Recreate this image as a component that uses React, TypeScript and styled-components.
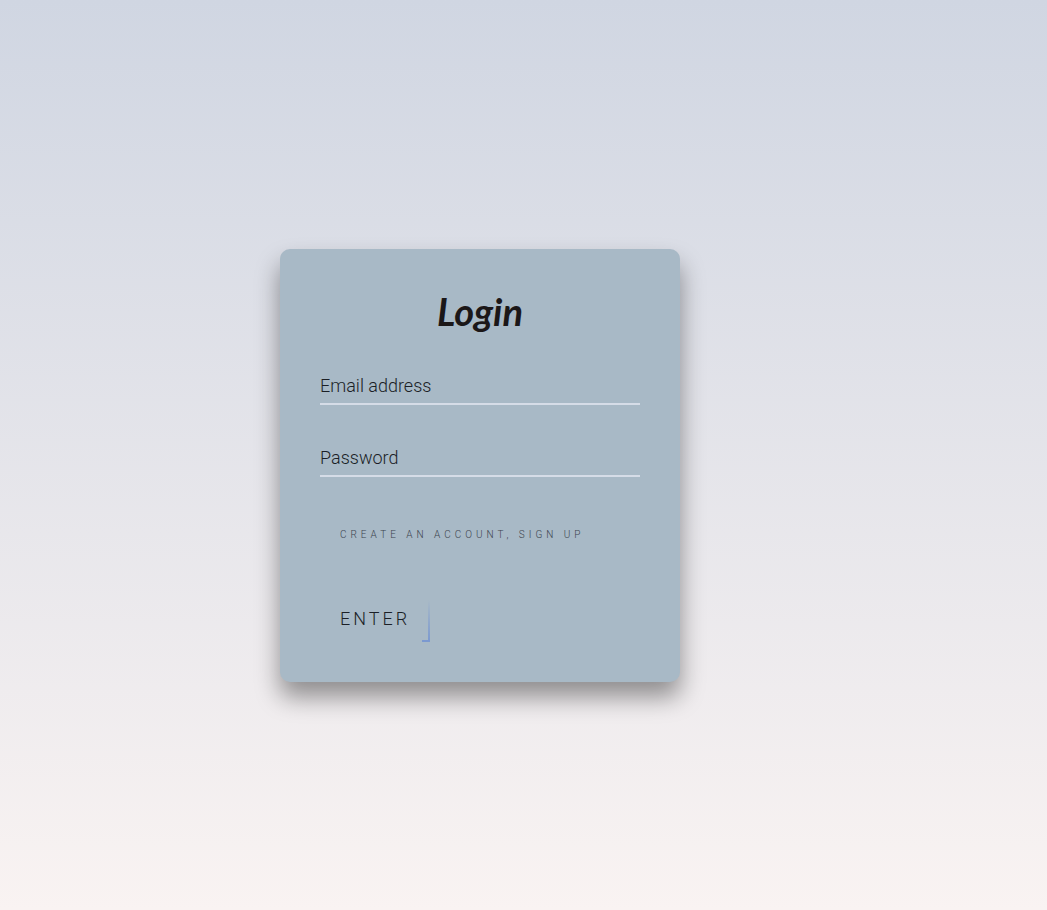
import React from "react";
import styled, { createGlobalStyle } from "styled-components";

const GlobalStyle = createGlobalStyle`
  * { box-sizing: border-box; }
  body {
    margin: 0;
    font-family: Roboto, "Liberation Sans", sans-serif;
    font-weight: 300;
  }
`;

const Page = styled.main`
  min-height: 100vh;
  background: linear-gradient(to bottom, #d0d6e2, #f9f3f2);
`;

const Stage = styled.div`
  display: flex;
  align-items: center;
  justify-content: center;
  max-width: 960px;
  min-height: 100vh;
  padding: 20px 0 0;
`;

const Card = styled.section`
  width: 400px;
  padding: 40px;
  border-radius: 10px;
  background: #a8b9c6;
  box-shadow: 0 15px 25px rgba(0, 0, 0, 0.4);
`;

const Title = styled.h1`
  margin: 0 0 30px;
  color: #1b1718;
  font-family: Lato, sans-serif;
  font-size: 38px;
  font-style: italic;
  font-weight: 700;
  line-height: 44px;
  text-align: center;
`;

const Form = styled.form`
  display: flex;
  flex-direction: column;
  align-items: flex-start;
`;

const Field = styled.div`
  position: relative;
  width: 100%;
  margin-bottom: 30px;
`;

const Input = styled.input`
  display: block;
  width: 100%;
  height: 42px;
  padding: 10px 0;
  border: 0;
  border-bottom: 2px solid #d5dce7;
  outline: none;
  background: transparent;
  color: #1b1f26;
  font: inherit;
  font-size: 18px;
`;

const Label = styled.label`
  position: absolute;
  top: 0;
  left: 0;
  padding: 10px 0;
  color: #1b1f26;
  font-size: 18px;
  line-height: 26px;
  pointer-events: none;

  ${Input}:focus + &,
  ${Input}:not(:placeholder-shown) + & {
    top: -20px;
    font-size: 12px;
  }
`;

const SignUpLink = styled.a`
  padding: 20px;
  color: #3c444e;
  font-size: 10px;
  letter-spacing: 4px;
  line-height: 16px;
  text-decoration: none;
  text-transform: uppercase;
  white-space: nowrap;
`;

const EnterButton = styled.button`
  position: relative;
  width: 110px;
  height: 47px;
  margin-top: 32px;
  padding: 0 20px;
  border: 0;
  background: transparent;
  color: #1b1f26;
  font: inherit;
  font-size: 18px;
  letter-spacing: 3px;
  text-align: left;
  text-transform: uppercase;
  cursor: pointer;

  &::before,
  &::after {
    content: "";
    position: absolute;
    right: 0;
    bottom: 0;
  }

  &::before {
    width: 2px;
    height: 42px;
    background: linear-gradient(to bottom, transparent, #7b99d0);
  }

  &::after {
    width: 8px;
    height: 2px;
    background: #7b99d0;
  }
`;

const fields = [
  { id: "email", type: "email", label: "Email address" },
  { id: "password", type: "password", label: "Password" },
];

export default function App() {
  return (
    <Page>
      <GlobalStyle />
      <Stage>
        <Card>
          <Title>Login</Title>
          <Form onSubmit={(event: React.FormEvent) => event.preventDefault()}>
            {fields.map(({ id, type, label }) => (
              <Field key={id}>
                <Input id={id} name={id} type={type} placeholder=" " />
                <Label htmlFor={id}>{label}</Label>
              </Field>
            ))}
            <SignUpLink href="#signup">Create an account, sign up</SignUpLink>
            <EnterButton type="submit">Enter</EnterButton>
          </Form>
        </Card>
      </Stage>
    </Page>
  );
}
